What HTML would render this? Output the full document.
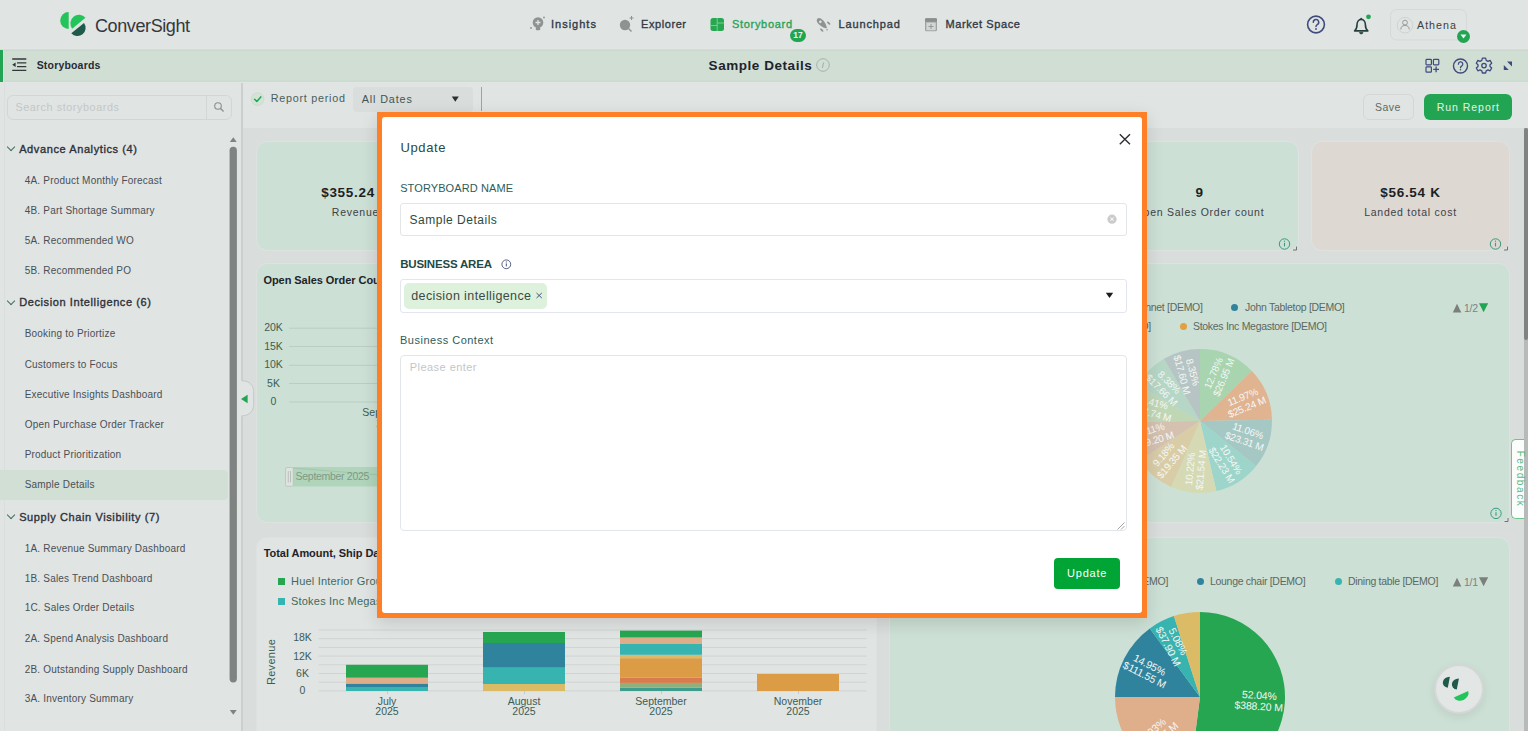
<!DOCTYPE html>
<html><head><meta charset="utf-8">
<style>
*{box-sizing:border-box;margin:0;padding:0}
html,body{width:1528px;height:731px;overflow:hidden}
body{position:relative;background:#d9dddc;font-family:"Liberation Sans",sans-serif;color:#2b2f3a}
.a{position:absolute}
.t{position:absolute;white-space:nowrap;line-height:1}
#hdr{left:0;top:0;width:1528px;height:49px;background:#e0e4e3;border-bottom:1px solid #e3e5e4}
#bar{left:0;top:49px;width:1528px;height:34px;background:#d0ded4;border-top:1px solid #d6ddd8;box-shadow:inset 0 1px 0 #c7d9cc,inset 0 -2px 0 #cbdcd0;border-bottom:1px solid #e3e5e4}
#side{left:0;top:83px;width:243px;height:648px;background:#e0e4e3;border-right:2px solid #cbcfce}
#tool{left:243px;top:83px;width:1285px;height:45px;background:#e0e4e3}
.nav{font-size:11px;-webkit-text-stroke:0.35px currentColor;color:#323a45}
.si{font-size:10px;color:#4a4f55;left:24.7px;letter-spacing:0.2px}
.sh{font-size:11px;-webkit-text-stroke:0.35px currentColor;color:#2d3139;left:19.2px;letter-spacing:0.6px}
.chev{position:absolute;left:8px;width:6px;height:6px;border-right:1px solid #3f6e5f;border-bottom:1px solid #3f6e5f;transform:rotate(45deg)}
.kpi{position:absolute;top:142px;width:197px;height:108px;background:#cde0d5;border-radius:10px;box-shadow:0 0 0 1px #dde1e0}
.kv{position:absolute;left:0;right:0;top:46px;text-align:center;font-size:14px;font-weight:bold;color:#1e2126;line-height:1}
.kl{position:absolute;left:0;right:0;top:66px;text-align:center;font-size:11px;color:#3c4045;line-height:1}
.card{position:absolute;background:#cde0d5;border-radius:10px;box-shadow:0 0 0 1px #dde1e0}
#modal{left:377px;top:112px;width:770px;height:506px;background:#ff7f27;box-shadow:0 5px 16px rgba(0,0,0,.13)}
#mi{left:5px;top:5px;width:760px;height:496px;background:#fff;border-radius:3px}
.lbl{font-size:11px;color:#2f5a58}
.inp{position:absolute;left:18px;width:726px;border:1px solid #e4e7ea;border-radius:3px;background:#fff}
</style></head>
<body>
<!-- HEADER -->
<div id="hdr" class="a"></div>
<svg class="a" style="left:0;top:0" width="100" height="50" viewBox="0 0 100 50">
<path d="M68.7,12 A8.5,8.5 0 0 0 68.7,29 Z" fill="#23c45a"/>
<path d="M72.2,28.7 A8.6,8.6 0 0 1 85.5,17.8 Z" fill="#23c45a"/>
<path d="M71.3,33.3 A8.15,8.15 0 0 0 84,23.1 Z" fill="#1f5a4b"/>
</svg>
<div class="t" style="left:95px;top:16.7px;font-size:18px;letter-spacing:-0.4px;color:#35383b">ConverSight</div>
<!-- nav icons -->
<svg class="a" style="left:520px;top:10px" width="520" height="34" viewBox="520 10 520 34">
 <!-- insights -->
 <circle cx="538" cy="22.5" r="5.3" fill="#8e9392"/>
 <rect x="535.8" y="27" width="4.4" height="3.2" rx="1" fill="#8e9392"/>
 <path d="M538,20 v5 M535.5,22.5 h5" stroke="#e0e4e3" stroke-width="1.3"/>
 <circle cx="531" cy="28" r="0.9" fill="#8e9392"/><circle cx="544" cy="17.5" r="0.9" fill="#8e9392"/>
 <!-- explorer -->
 <circle cx="625" cy="25" r="5.2" fill="#8e9392"/>
 <path d="M628.5,28.5 L631.5,31.5" stroke="#8e9392" stroke-width="1.4"/>
 <path d="M631.5,16 v4 M629.5,18 h4" stroke="#8e9392" stroke-width="1"/>
 <!-- storyboard -->
 <rect x="710.5" y="18" width="13.5" height="13" rx="2.5" fill="#27a850"/>
 <path d="M717.2,18 v13 M710.5,25.5 h6.7 M717.2,23 h6.8" stroke="#8fd3a6" stroke-width="0.8"/>
 <!-- launchpad -->
 <g transform="translate(822.2,23.6) rotate(45)" fill="#8e9392">
  <path d="M-6.8,0 C-6.8,-3.2 -1,-3.5 3,-2 C5,-1.1 6.4,-0.5 6.4,0 C6.4,0.5 5,1.1 3,2 C-1,3.5 -6.8,3.2 -6.8,0 Z"/>
  <circle cx="-2.6" cy="0" r="1.3" fill="#e0e4e3"/>
  <ellipse cx="4.3" cy="-4.9" rx="2.1" ry="0.95"/>
  <ellipse cx="4.3" cy="4.9" rx="2.1" ry="0.95"/>
  <circle cx="7.8" cy="0.9" r="0.75"/>
 </g>
 <!-- market space -->
 <rect x="925" y="18.2" width="12" height="13" rx="1.5" fill="#9ea3a2"/>
 <rect x="925" y="18.2" width="12" height="3.5" rx="1" fill="#8a8f8e"/>
 <rect x="926.3" y="22.5" width="9.4" height="7.8" fill="#d2d6d5"/>
 <path d="M931,24 v5 M928.5,26.5 h5" stroke="#8e9392" stroke-width="0.9"/>
</svg>
<div class="t nav" style="left:551px;top:18.55px;letter-spacing:1.0px">Insights</div>
<div class="t nav" style="left:641px;top:18.55px;letter-spacing:0.58px">Explorer</div>
<div class="t nav" style="left:732px;top:18.55px;letter-spacing:0.69px;color:#2aa358">Storyboard</div>
<div class="a" style="left:790px;top:28.5px;width:16px;height:13px;border-radius:7px;background:#22a553;color:#e8f5ec;font-size:8.5px;font-weight:bold;line-height:13px;text-align:center">17</div>
<div class="t nav" style="left:838.5px;top:18.55px;letter-spacing:0.88px">Launchpad</div>
<div class="t nav" style="left:945.5px;top:18.55px;letter-spacing:0.6px">Market Space</div>
<!-- right header -->
<svg class="a" style="left:1300px;top:5px" width="180" height="42" viewBox="1300 5 180 42">
 <circle cx="1316" cy="24.5" r="8.4" fill="none" stroke="#3f4b7c" stroke-width="1.6"/>
 <path d="M1313.3,22.3 a2.7,2.7 0 1 1 4,2.3 c-1,0.6 -1.3,1 -1.3,2" fill="none" stroke="#3f4b7c" stroke-width="1.5" stroke-linecap="round"/>
 <circle cx="1316" cy="29" r="0.9" fill="#3f4b7c"/>
 <path d="M1354.6,30.9 C1356.6,29.3 1357,27.2 1357,24.8 C1357,21.6 1358.8,19.4 1361.2,19.4 C1363.6,19.4 1365.4,21.6 1365.4,24.8 C1365.4,27.2 1365.8,29.3 1367.8,30.9 Z" fill="none" stroke="#25403a" stroke-width="1.6" stroke-linejoin="round"/>
 <circle cx="1361.2" cy="18.6" r="0.9" fill="#25403a"/>
 <path d="M1359.4,32.6 a1.9,1.9 0 0 0 3.6,0 Z" fill="#25403a" stroke="#25403a" stroke-width="0.8"/>
 <circle cx="1368.5" cy="16.8" r="2.4" fill="#22a553"/>
 <rect x="1390.5" y="9.5" width="76" height="30.5" rx="6" fill="none" stroke="#d5d9d8"/>
 <circle cx="1405" cy="25.2" r="7.8" fill="none" stroke="#cfd3d2"/>
 <circle cx="1405" cy="22.6" r="2.4" fill="none" stroke="#8e9392" stroke-width="0.9"/>
 <path d="M1400.8,29.5 a4.2,4 0 0 1 8.4,0" fill="none" stroke="#8e9392" stroke-width="0.9"/>
 <circle cx="1463.5" cy="36.5" r="6.5" fill="#22a553"/>
 <path d="M1460.5,34.6 h6 l-3,4 z" fill="#e8f5ec"/>
</svg>
<div class="t" style="left:1417px;top:19.91px;font-size:10.7px;letter-spacing:1px;color:#3b3f45">Athena</div>

<!-- BAR -->
<div id="bar" class="a"></div>
<div class="a" style="left:0;top:50px;width:3px;height:32px;background:#22a553"></div><div class="a" style="left:3px;top:50px;width:1px;height:32px;background:#dbe5de"></div>
<svg class="a" style="left:0;top:50px" width="40" height="32" viewBox="0 50 40 32">
 <path d="M12.2,59 h14.1 M17,62.8 h9.3 M17,66.6 h9.3 M12.2,70.3 h14.1" stroke="#34383b" stroke-width="1.3"/>
 <path d="M12.2,64.7 L15.6,62.4 L15.6,67 Z" fill="#34383b"/>
</svg>
<div class="t" style="left:36.7px;top:59.98px;font-size:10.5px;font-weight:bold;letter-spacing:0.18px;color:#272b33">Storyboards</div>
<div class="t" style="left:708.6px;top:58.7px;font-size:13.5px;font-weight:bold;letter-spacing:0.55px;color:#1f232b">Sample Details</div>
<svg class="a" style="left:1400px;top:50px" width="128" height="32" viewBox="1400 50 128 32">
 <rect x="1426" y="59.4" width="5.4" height="5.4" rx="0.8" fill="none" stroke="#3f4b7c" stroke-width="1.2"/>
 <rect x="1433.4" y="59.4" width="5.4" height="5.4" rx="0.8" fill="none" stroke="#3f4b7c" stroke-width="1.2"/>
 <rect x="1426" y="66.8" width="5.4" height="5.4" rx="0.8" fill="none" stroke="#3f4b7c" stroke-width="1.2"/>
 <path d="M1436.1,66.5 v5.8 M1433.2,69.4 h5.8" stroke="#3f4b7c" stroke-width="1.3"/>
 <circle cx="1460.5" cy="66" r="7" fill="none" stroke="#3f4b7c" stroke-width="1.4"/>
 <path d="M1458.4,64.2 a2.2,2.2 0 1 1 3.2,1.9 c-0.8,0.5 -1.1,0.8 -1.1,1.7" fill="none" stroke="#3f4b7c" stroke-width="1.3" stroke-linecap="round"/>
 <circle cx="1460.5" cy="69.8" r="0.75" fill="#3f4b7c"/>
 <g transform="translate(1484,65.6)" fill="none" stroke="#3f4b7c" stroke-width="1.3" stroke-linejoin="round">
  <path d="M-1.6,-7.4 L1.6,-7.4 L2.2,-5.2 L4,-4.3 L6.1,-5.2 L7.7,-2.4 L6,-0.9 L6,0.9 L7.7,2.4 L6.1,5.2 L4,4.3 L2.2,5.2 L1.6,7.4 L-1.6,7.4 L-2.2,5.2 L-4,4.3 L-6.1,5.2 L-7.7,2.4 L-6,0.9 L-6,-0.9 L-7.7,-2.4 L-6.1,-5.2 L-4,-4.3 L-2.2,-5.2 Z"/>
  <circle r="2.2"/>
 </g>
 <path d="M1507,61.6 L1512,61.6 L1512,66.6 Z M1503.8,65 L1503.8,70 L1508.8,70 Z" fill="#3f4b7c"/>
</svg>
<svg class="a" style="left:810px;top:52px" width="26" height="26" viewBox="810 52 26 26">
 <circle cx="823" cy="65" r="6.3" fill="none" stroke="#a3aca7" stroke-width="0.9"/>
 <path d="M823.6,62.5 L822.4,68" stroke="#a3aca7" stroke-width="1"/>
</svg>
<!-- SIDEBAR -->
<div id="side" class="a"></div>
<div class="a" style="left:6.5px;top:94.5px;width:225px;height:25px;border:1px solid #d2d6d5;border-radius:6px"></div>
<div class="a" style="left:206px;top:95px;width:1px;height:24px;background:#d2d6d5"></div>
<svg class="a" style="left:210px;top:98px" width="20" height="18" viewBox="210 98 20 18">
 <circle cx="218" cy="106" r="3.3" fill="none" stroke="#8a8f8e" stroke-width="1.1"/>
 <path d="M220.5,108.5 L223.6,111.5" stroke="#8a8f8e" stroke-width="1.2"/>
</svg>
<div class="t" style="left:15.4px;top:101.82px;font-size:10.8px;letter-spacing:0.58px;color:#c3c7c6">Search storyboards</div>
<div id="tool" class="a"></div>

<div class="a" style="left:4px;top:82px;width:1px;height:649px;background:#dadedd"></div>
<div class="a" style="left:0;top:470px;width:228px;height:30px;background:#d1dfd5;border-radius:0 4px 4px 0"></div>
<div class="chev" style="top:143.6px"></div>
<div class="t sh" style="top:143.59px">Advance Analytics (4)</div>
<div class="t si" style="top:175.75px">4A. Product Monthly Forecast</div>
<div class="t si" style="top:206.05px">4B. Part Shortage Summary</div>
<div class="t si" style="top:236.45px">5A. Recommended WO</div>
<div class="t si" style="top:265.95px">5B. Recommended PO</div>
<div class="chev" style="top:297.5px"></div>
<div class="t sh" style="top:297.49px">Decision Intelligence (6)</div>
<div class="t si" style="top:329.25px">Booking to Priortize</div>
<div class="t si" style="top:359.55px">Customers to Focus</div>
<div class="t si" style="top:389.95px">Executive Insights Dashboard</div>
<div class="t si" style="top:419.75px">Open Purchase Order Tracker</div>
<div class="t si" style="top:450.15px">Product Prioritization</div>
<div class="t si" style="top:480.45px">Sample Details</div>
<div class="chev" style="top:511.6px"></div>
<div class="t sh" style="top:511.59px">Supply Chain Visibility (7)</div>
<div class="t si" style="top:543.75px">1A. Revenue Summary Dashboard</div>
<div class="t si" style="top:573.55px">1B. Sales Trend Dashboard</div>
<div class="t si" style="top:603.45px">1C. Sales Order Details</div>
<div class="t si" style="top:634.25px">2A. Spend Analysis Dashboard</div>
<div class="t si" style="top:664.55px">2B. Outstanding Supply Dashboard</div>
<div class="t si" style="top:694.45px">3A. Inventory Summary</div>
<svg class="a" style="left:226px;top:130px" width="14" height="600" viewBox="226 130 14 600"><path d="M229.8,142 L233.3,137.3 L236.7,142 Z" fill="#7f8382"/><rect x="229.6" y="146.8" width="7.3" height="535.6" rx="3.6" fill="#7f8382"/><path d="M229.8,710 L233.3,714.7 L236.7,710 Z" fill="#7f8382"/></svg>
<svg class="a" style="left:238px;top:370px" width="20" height="56" viewBox="238 370 20 56"><path d="M240.8,380.8 H242 C249.5,380.8 253.6,385.5 253.6,391.5 V404.6 C253.6,410.6 249.5,415.8 242,415.8 H240.8 Z" fill="#e0e4e3"/><path d="M242,380.8 C249.5,380.8 253.6,385.5 253.6,391.5 V404.6 C253.6,410.6 249.5,415.8 242,415.8" fill="none" stroke="#c5cac8" stroke-width="1"/><path d="M241,399 L247.6,394.8 L247.6,403.2 Z" fill="#22a553"/></svg>
<svg class="a" style="left:248px;top:90px" width="20" height="18" viewBox="248 90 20 18">
 <circle cx="257.6" cy="99.1" r="6.3" fill="#d3e4d7" stroke="#c6d9cb" stroke-width="0.8"/>
 <path d="M254.6,99.3 L256.8,101.5 L260.8,96.9" fill="none" stroke="#22a553" stroke-width="1.5" stroke-linecap="round" stroke-linejoin="round"/>
</svg>
<div class="t" style="left:270.7px;top:93.42px;font-size:10.8px;letter-spacing:0.74px;color:#4b5f58">Report period</div>
<div class="a" style="left:353px;top:87px;width:119.5px;height:24.5px;background:#d9dddc;border-radius:4px"></div>
<div class="t" style="left:361.8px;top:93.82px;font-size:10.8px;letter-spacing:0.85px;color:#3f5750">All Dates</div>
<svg class="a" style="left:448px;top:92px" width="14" height="12" viewBox="448 92 14 12"><path d="M451.8,96.6 L458.8,96.6 L455.3,101.8 Z" fill="#2c3033"/></svg>
<div class="a" style="left:481px;top:87px;width:1.2px;height:24px;background:#9ea2a1"></div>
<div class="a" style="left:1362.5px;top:94.3px;width:51px;height:25.4px;border:1px solid #d3d7d6;border-radius:6px"></div>
<div class="t" style="left:1375px;top:101.98px;font-size:10.5px;letter-spacing:0.45px;color:#5c6a63">Save</div>
<div class="a" style="left:1424px;top:94.3px;width:88px;height:25.4px;background:#22a553;border-radius:6px"></div>
<div class="t" style="left:1436.8px;top:101.98px;font-size:10.5px;letter-spacing:0.95px;color:#e3f3e8">Run Report</div>
<!-- main scrollbar -->
<div class="a" style="left:1524px;top:128px;width:4px;height:603px;background:#b6bab9"></div><div class="a" style="left:1523.5px;top:128.2px;width:4.5px;height:212px;background:#7f8382;border-radius:2px"></div>

<div class="kpi" style="left:257px;background:#cde0d5"></div>
<div class="t" style="left:155.50px;width:400px;text-align:center;top:186.22px;font-size:13.5px;font-weight:bold;letter-spacing:0.7px;color:#1c1f24">$355.24 K</div>
<div class="t" style="left:155.50px;width:400px;text-align:center;top:206.88px;font-size:10.5px;letter-spacing:0.75px;color:#3d4146">Revenue</div>
<svg class="a" style="left:432px;top:236px" width="22" height="16" viewBox="432 236 22 16"><circle cx="440.5" cy="244" r="5.2" fill="none" stroke="#3a9a82" stroke-width="1"/><path d="M440.5,242.8 v3.6" stroke="#3a9a82" stroke-width="1.1"/><circle cx="440.5" cy="241.2" r="0.65" fill="#3a9a82"/><path d="M452.5,246.5 v3.5 h-3.5" fill="none" stroke="#5f6b66" stroke-width="0.9"/></svg>
<div class="kpi" style="left:468px;background:#cde0d5"></div>
<div class="t" style="left:366.50px;width:400px;text-align:center;top:186.22px;font-size:13.5px;font-weight:bold;letter-spacing:0.7px;color:#1c1f24">$78.20 K</div>
<div class="t" style="left:366.50px;width:400px;text-align:center;top:206.88px;font-size:10.5px;letter-spacing:0.75px;color:#3d4146">Open Purchase Order</div>
<svg class="a" style="left:643px;top:236px" width="22" height="16" viewBox="643 236 22 16"><circle cx="651.5" cy="244" r="5.2" fill="none" stroke="#3a9a82" stroke-width="1"/><path d="M651.5,242.8 v3.6" stroke="#3a9a82" stroke-width="1.1"/><circle cx="651.5" cy="241.2" r="0.65" fill="#3a9a82"/><path d="M663.5,246.5 v3.5 h-3.5" fill="none" stroke="#5f6b66" stroke-width="0.9"/></svg>
<div class="kpi" style="left:679px;background:#cde0d5"></div>
<div class="t" style="left:577.50px;width:400px;text-align:center;top:186.22px;font-size:13.5px;font-weight:bold;letter-spacing:0.7px;color:#1c1f24">12</div>
<div class="t" style="left:577.50px;width:400px;text-align:center;top:206.88px;font-size:10.5px;letter-spacing:0.75px;color:#3d4146">Open Purchase Orders</div>
<svg class="a" style="left:854px;top:236px" width="22" height="16" viewBox="854 236 22 16"><circle cx="862.5" cy="244" r="5.2" fill="none" stroke="#3a9a82" stroke-width="1"/><path d="M862.5,242.8 v3.6" stroke="#3a9a82" stroke-width="1.1"/><circle cx="862.5" cy="241.2" r="0.65" fill="#3a9a82"/><path d="M874.5,246.5 v3.5 h-3.5" fill="none" stroke="#5f6b66" stroke-width="0.9"/></svg>
<div class="kpi" style="left:890px;background:#cde0d5"></div>
<div class="t" style="left:788.50px;width:400px;text-align:center;top:186.22px;font-size:13.5px;font-weight:bold;letter-spacing:0.7px;color:#1c1f24">$21.35 K</div>
<div class="t" style="left:788.50px;width:400px;text-align:center;top:206.88px;font-size:10.5px;letter-spacing:0.75px;color:#3d4146">Open Sales Amount</div>
<svg class="a" style="left:1065px;top:236px" width="22" height="16" viewBox="1065 236 22 16"><circle cx="1073.5" cy="244" r="5.2" fill="none" stroke="#3a9a82" stroke-width="1"/><path d="M1073.5,242.8 v3.6" stroke="#3a9a82" stroke-width="1.1"/><circle cx="1073.5" cy="241.2" r="0.65" fill="#3a9a82"/><path d="M1085.5,246.5 v3.5 h-3.5" fill="none" stroke="#5f6b66" stroke-width="0.9"/></svg>
<div class="kpi" style="left:1101px;background:#cde0d5"></div>
<div class="t" style="left:999.50px;width:400px;text-align:center;top:186.22px;font-size:13.5px;font-weight:bold;letter-spacing:0.7px;color:#1c1f24">9</div>
<div class="t" style="left:999.50px;width:400px;text-align:center;top:206.88px;font-size:10.5px;letter-spacing:0.75px;color:#3d4146">Open Sales Order count</div>
<svg class="a" style="left:1276px;top:236px" width="22" height="16" viewBox="1276 236 22 16"><circle cx="1284.5" cy="244" r="5.2" fill="none" stroke="#3a9a82" stroke-width="1"/><path d="M1284.5,242.8 v3.6" stroke="#3a9a82" stroke-width="1.1"/><circle cx="1284.5" cy="241.2" r="0.65" fill="#3a9a82"/><path d="M1296.5,246.5 v3.5 h-3.5" fill="none" stroke="#5f6b66" stroke-width="0.9"/></svg>
<div class="kpi" style="left:1312px;background:#ddd8d2"></div>
<div class="t" style="left:1210.50px;width:400px;text-align:center;top:186.22px;font-size:13.5px;font-weight:bold;letter-spacing:0.7px;color:#1c1f24">$56.54 K</div>
<div class="t" style="left:1210.50px;width:400px;text-align:center;top:206.88px;font-size:10.5px;letter-spacing:0.75px;color:#3d4146">Landed total cost</div>
<svg class="a" style="left:1487px;top:236px" width="22" height="16" viewBox="1487 236 22 16"><circle cx="1495.5" cy="244" r="5.2" fill="none" stroke="#3a9a82" stroke-width="1"/><path d="M1495.5,242.8 v3.6" stroke="#3a9a82" stroke-width="1.1"/><circle cx="1495.5" cy="241.2" r="0.65" fill="#3a9a82"/><path d="M1507.5,246.5 v3.5 h-3.5" fill="none" stroke="#5f6b66" stroke-width="0.9"/></svg>
<div class="card" style="left:257px;top:264px;width:619px;height:258px"></div>
<div class="card" style="left:890px;top:264px;width:619px;height:258px"></div>
<div class="card" style="left:257px;top:538px;width:619px;height:220px;background:#e0e4e3"></div>
<div class="card" style="left:890px;top:538px;width:619px;height:220px"></div>
<div class="t" style="left:263.40px;top:275.15px;font-size:11px;font-weight:bold;letter-spacing:-0.05px;color:#1f2328">Open Sales Order Count, Order Date</div>
<svg class="a" style="left:257px;top:264px" width="619" height="258" viewBox="257 264 619 258">
<path d="M289,328.2 H866" stroke="#bccdc3" stroke-width="1"/>
<path d="M289,346.5 H866" stroke="#bccdc3" stroke-width="1"/>
<path d="M289,365.3 H866" stroke="#bccdc3" stroke-width="1"/>
<path d="M289,383.5 H866" stroke="#bccdc3" stroke-width="1"/>
<path d="M289,402.0 H866" stroke="#bccdc3" stroke-width="1"/>
<rect x="293" y="467" width="560" height="19.5" fill="#b0d5ba"/>
<path d="M293,468 L380,475 L853,476" fill="none" stroke="#9fc0aa" stroke-width="0.8"/>
<rect x="285.5" y="467.5" width="7.8" height="18.8" rx="1.5" fill="#dde3df" stroke="#b9c1bc" stroke-width="0.8"/>
<path d="M288.3,471 v11.5 M290.5,471 v11.5" stroke="#a9b1ac" stroke-width="0.7"/>
</svg>
<div class="t" style="left:73.50px;width:400px;text-align:center;top:322.38px;font-size:10.5px;color:#3b5d55">20K</div>
<div class="t" style="left:73.50px;width:400px;text-align:center;top:340.68px;font-size:10.5px;color:#3b5d55">15K</div>
<div class="t" style="left:73.50px;width:400px;text-align:center;top:359.48px;font-size:10.5px;color:#3b5d55">10K</div>
<div class="t" style="left:73.50px;width:400px;text-align:center;top:377.68px;font-size:10.5px;color:#3b5d55">5K</div>
<div class="t" style="left:73.50px;width:400px;text-align:center;top:396.18px;font-size:10.5px;color:#3b5d55">0</div>
<div class="t" style="left:188.00px;width:400px;text-align:center;top:406.97px;font-size:10.5px;color:#3b5d55">September</div>
<div class="t" style="left:188.00px;width:400px;text-align:center;top:417.57px;font-size:10.5px;color:#3b5d55">2025</div>
<div class="t" style="left:295.60px;top:471.07px;font-size:10.5px;letter-spacing:-0.3px;color:#7f9a88">September 2025</div>
<div class="t" style="left:802.60px;width:400px;text-align:right;top:301.57px;font-size:10.5px;letter-spacing:-0.3px;color:#5a6962">Walsh Bonnet [DEMO]</div>
<div class="a" style="left:1230.5px;top:303.5px;width:7px;height:7px;border-radius:50%;background:#30839d"></div>
<div class="t" style="left:1245.00px;top:301.57px;font-size:10.5px;letter-spacing:-0.3px;color:#5a6962">John Tabletop [DEMO]</div>
<div class="t" style="left:751.00px;width:400px;text-align:right;top:320.88px;font-size:10.5px;letter-spacing:-0.3px;color:#5a6962">Mills [DEMO]</div>
<div class="a" style="left:1179.5px;top:322.5px;width:7px;height:7px;border-radius:50%;background:#e3a040"></div>
<div class="t" style="left:1193.00px;top:320.88px;font-size:10.5px;letter-spacing:-0.3px;color:#5a6962">Stokes Inc Megastore [DEMO]</div>
<svg class="a" style="left:1450px;top:300px" width="42" height="14" viewBox="1450 300 42 14"><path d="M1452.8,312.5 L1457,303.7 L1461.3,312.5 Z" fill="#7b807d"/><path d="M1479,303.2 L1488.2,303.2 L1483.6,312.2 Z" fill="#22a553"/></svg><div class="t" style="left:1464.00px;top:302.68px;font-size:10.5px;letter-spacing:-0.3px;color:#7d827f">1/2</div>
<svg class="a" style="left:1126px;top:347px" width="148" height="148" viewBox="1126 347 148 148" overflow="visible">
<path d="M1200,421 L1200.00,349.00 A72,72 0 0 1 1251.80,370.99 Z" fill="#a8d4b0"/>
<path d="M1200,421 L1251.80,370.99 A72,72 0 0 1 1271.99,419.87 Z" fill="#e0b391"/>
<path d="M1200,421 L1271.99,419.87 A72,72 0 0 1 1256.02,466.23 Z" fill="#a5c8c4"/>
<path d="M1200,421 L1256.02,466.23 A72,72 0 0 1 1216.37,491.11 Z" fill="#9dd5ca"/>
<path d="M1200,421 L1216.37,491.11 A72,72 0 0 1 1171.12,486.95 Z" fill="#d5dab4"/>
<path d="M1200,421 L1171.12,486.95 A72,72 0 0 1 1139.82,460.53 Z" fill="#d9cda7"/>
<path d="M1200,421 L1139.82,460.53 A72,72 0 0 1 1128.00,421.63 Z" fill="#d5c1af"/>
<path d="M1200,421 L1128.00,421.63 A72,72 0 0 1 1137.50,385.25 Z" fill="#c0d7b6"/>
<path d="M1200,421 L1137.50,385.25 A72,72 0 0 1 1163.93,358.68 Z" fill="#b6d6c6"/>
<path d="M1200,421 L1163.93,358.68 A72,72 0 0 1 1200.00,349.00 Z" fill="#b6c5c4"/>
</svg>
<div class="a" style="left:1179.1px;top:365.4px;width:80px;height:21.0px;transform:rotate(-67.0deg);text-align:center;color:#f4f7f5;font-size:10px;line-height:10.5px;letter-spacing:-0.2px;white-space:nowrap">12.78%<br>$26.95 M</div>
<div class="a" style="left:1205.3px;top:391.8px;width:80px;height:21.0px;transform:rotate(-22.4deg);text-align:center;color:#f4f7f5;font-size:10px;line-height:10.5px;letter-spacing:-0.2px;white-space:nowrap">11.97%<br>$25.24 M</div>
<div class="a" style="left:1206.3px;top:426.4px;width:80px;height:21.0px;transform:rotate(19.0deg);text-align:center;color:#f4f7f5;font-size:10px;line-height:10.5px;letter-spacing:-0.2px;white-space:nowrap">11.06%<br>$23.31 M</div>
<div class="a" style="left:1186.0px;top:452.0px;width:80px;height:21.0px;transform:rotate(57.9deg);text-align:center;color:#f4f7f5;font-size:10px;line-height:10.5px;letter-spacing:-0.2px;white-space:nowrap">10.54%<br>$22.23 M</div>
<div class="a" style="left:1155.5px;top:459.3px;width:80px;height:21.0px;transform:rotate(-84.7deg);text-align:center;color:#f4f7f5;font-size:10px;line-height:10.5px;letter-spacing:-0.2px;white-space:nowrap">10.22%<br>$21.54 M</div>
<div class="a" style="left:1128.4px;top:447.9px;width:80px;height:21.0px;transform:rotate(-49.8deg);text-align:center;color:#f4f7f5;font-size:10px;line-height:10.5px;letter-spacing:-0.2px;white-space:nowrap">9.18%<br>$19.35 M</div>
<div class="a" style="left:1113.2px;top:424.7px;width:80px;height:21.0px;transform:rotate(-16.9deg);text-align:center;color:#f4f7f5;font-size:10px;line-height:10.5px;letter-spacing:-0.2px;white-space:nowrap">9.11%<br>$19.20 M</div>
<div class="a" style="left:1112.6px;top:398.1px;width:80px;height:21.0px;transform:rotate(14.6deg);text-align:center;color:#f4f7f5;font-size:10px;line-height:10.5px;letter-spacing:-0.2px;white-space:nowrap">8.41%<br>$17.74 M</div>
<div class="a" style="left:1125.3px;top:376.0px;width:80px;height:21.0px;transform:rotate(44.9deg);text-align:center;color:#f4f7f5;font-size:10px;line-height:10.5px;letter-spacing:-0.2px;white-space:nowrap">8.38%<br>$17.66 M</div>
<div class="a" style="left:1147.3px;top:363.2px;width:80px;height:21.0px;transform:rotate(75.0deg);text-align:center;color:#f4f7f5;font-size:10px;line-height:10.5px;letter-spacing:-0.2px;white-space:nowrap">8.35%<br>$17.60 M</div>
<svg class="a" style="left:1487px;top:504px" width="24" height="20" viewBox="1487 504 24 20"><circle cx="1496" cy="513.4" r="5.2" fill="none" stroke="#3a9a82" stroke-width="1"/><path d="M1496,512.2 v3.6" stroke="#3a9a82" stroke-width="1.1"/><circle cx="1496" cy="510.6" r="0.65" fill="#3a9a82"/><path d="M1508,518 v3.5 h-3.5" fill="none" stroke="#5f6b66" stroke-width="0.9"/></svg>
<div class="t" style="left:263.70px;top:548.15px;font-size:11px;font-weight:bold;letter-spacing:-0.05px;color:#1f2328">Total Amount, Ship Date</div>
<div class="a" style="left:278px;top:578px;width:7px;height:7px;background:#27a651"></div>
<div class="t" style="left:291.00px;top:575.85px;font-size:11px;letter-spacing:0.2px;color:#3e6a5e">Huel Interior Group [DEMO]</div>
<div class="a" style="left:278px;top:598px;width:7px;height:7px;background:#37b3b0"></div>
<div class="t" style="left:291.00px;top:595.95px;font-size:11px;letter-spacing:0.2px;color:#3e6a5e">Stokes Inc Megastore [DEMO]</div>
<svg class="a" style="left:257px;top:538px" width="619" height="193" viewBox="257 538 619 193">
<path d="M318.7,630.0 H866.6" stroke="#cfd3d2" stroke-width="1"/>
<path d="M318.7,638.7 H866.6" stroke="#cfd3d2" stroke-width="1"/>
<path d="M318.7,647.4 H866.6" stroke="#cfd3d2" stroke-width="1"/>
<path d="M318.7,656.1 H866.6" stroke="#cfd3d2" stroke-width="1"/>
<path d="M318.7,664.8 H866.6" stroke="#cfd3d2" stroke-width="1"/>
<path d="M318.7,673.5 H866.6" stroke="#cfd3d2" stroke-width="1"/>
<path d="M318.7,682.2 H866.6" stroke="#cfd3d2" stroke-width="1"/>
<path d="M318.7,690.9 H866.6" stroke="#cfd3d2" stroke-width="1"/>
<rect x="346" y="687.6" width="82" height="3.4" fill="#37b3b0"/>
<rect x="346" y="683.5" width="82" height="4.1" fill="#30839d"/>
<rect x="346" y="677.7" width="82" height="5.8" fill="#e0ad8a"/>
<rect x="346" y="664.8" width="82" height="12.9" fill="#27a651"/>
<rect x="483" y="684.0" width="82" height="7.0" fill="#dcbb66"/>
<rect x="483" y="667.7" width="82" height="16.3" fill="#37b3b0"/>
<rect x="483" y="643.0" width="82" height="24.7" fill="#30839d"/>
<rect x="483" y="632.0" width="82" height="11.0" fill="#27a651"/>
<rect x="620" y="687.6" width="82" height="3.4" fill="#3d9c8c"/>
<rect x="620" y="682.9" width="82" height="4.7" fill="#8fb07d"/>
<rect x="620" y="677.7" width="82" height="5.2" fill="#d97c4d"/>
<rect x="620" y="658.2" width="82" height="19.5" fill="#dc9b45"/>
<rect x="620" y="654.8" width="82" height="3.4" fill="#dcbb66"/>
<rect x="620" y="644.0" width="82" height="10.8" fill="#37b3b0"/>
<rect x="620" y="637.5" width="82" height="6.5" fill="#e0ad8a"/>
<rect x="620" y="630.6" width="82" height="6.9" fill="#27a651"/>
<rect x="757" y="674.0" width="82" height="17.0" fill="#dc9b45"/>
<path d="M387.5,691 v3" stroke="#c5c9c8" stroke-width="1"/>
<path d="M524.5,691 v3" stroke="#c5c9c8" stroke-width="1"/>
<path d="M661.5,691 v3" stroke="#c5c9c8" stroke-width="1"/>
<path d="M798.5,691 v3" stroke="#c5c9c8" stroke-width="1"/>
</svg>
<div class="t" style="left:102.50px;width:400px;text-align:center;top:632.48px;font-size:10.5px;color:#3b5d55">18K</div>
<div class="t" style="left:102.50px;width:400px;text-align:center;top:650.68px;font-size:10.5px;color:#3b5d55">12K</div>
<div class="t" style="left:102.50px;width:400px;text-align:center;top:667.68px;font-size:10.5px;color:#3b5d55">6K</div>
<div class="t" style="left:102.50px;width:400px;text-align:center;top:684.68px;font-size:10.5px;color:#3b5d55">0</div>
<div class="a" style="left:230.6px;top:655px;width:80px;height:14px;transform:rotate(-90deg);text-align:center;font-size:11px;line-height:14px;color:#3b5d55;letter-spacing:0.3px">Revenue</div>
<div class="t" style="left:187.00px;width:400px;text-align:center;top:695.68px;font-size:10.5px;color:#3b5d55">July</div>
<div class="t" style="left:187.00px;width:400px;text-align:center;top:705.68px;font-size:10.5px;color:#3b5d55">2025</div>
<div class="t" style="left:324.00px;width:400px;text-align:center;top:695.68px;font-size:10.5px;color:#3b5d55">August</div>
<div class="t" style="left:324.00px;width:400px;text-align:center;top:705.68px;font-size:10.5px;color:#3b5d55">2025</div>
<div class="t" style="left:461.00px;width:400px;text-align:center;top:695.68px;font-size:10.5px;color:#3b5d55">September</div>
<div class="t" style="left:461.00px;width:400px;text-align:center;top:705.68px;font-size:10.5px;color:#3b5d55">2025</div>
<div class="t" style="left:598.00px;width:400px;text-align:center;top:695.68px;font-size:10.5px;color:#3b5d55">November</div>
<div class="t" style="left:598.00px;width:400px;text-align:center;top:705.68px;font-size:10.5px;color:#3b5d55">2025</div>
<div class="t" style="left:768.00px;width:400px;text-align:right;top:575.58px;font-size:10.5px;letter-spacing:-0.3px;color:#5a6962">Huel Interior Group [DEMO]</div>
<div class="a" style="left:1196.5px;top:577.5px;width:7px;height:7px;border-radius:50%;background:#30839d"></div>
<div class="t" style="left:1210.00px;top:575.58px;font-size:10.5px;letter-spacing:-0.3px;color:#5a6962">Lounge chair [DEMO]</div>
<div class="a" style="left:1334.5px;top:577.5px;width:7px;height:7px;border-radius:50%;background:#37b3b0"></div>
<div class="t" style="left:1348.00px;top:575.58px;font-size:10.5px;letter-spacing:-0.3px;color:#5a6962">Dining table [DEMO]</div>
<svg class="a" style="left:1450px;top:574px" width="42" height="14" viewBox="1450 574 42 14"><path d="M1452.8,586.5 L1457,577.7 L1461.3,586.5 Z" fill="#7b807d"/><path d="M1479,577.2 L1488.2,577.2 L1483.6,586.2 Z" fill="#7b807d"/></svg><div class="t" style="left:1464.00px;top:576.68px;font-size:10.5px;letter-spacing:-0.3px;color:#7d827f">1/1</div>
<svg class="a" style="left:1113px;top:610px" width="174" height="174" viewBox="1113 610 174 174" overflow="visible">
<path d="M1200,697 L1200.00,612.00 A85,85 0 1 1 1189.13,781.30 Z" fill="#27a651"/>
<path d="M1200,697 L1189.13,781.30 A85,85 0 0 1 1115.00,697.00 Z" fill="#dfae8b"/>
<path d="M1200,697 L1115.00,697.00 A85,85 0 0 1 1149.82,628.39 Z" fill="#30839d"/>
<path d="M1200,697 L1149.82,628.39 A85,85 0 0 1 1173.89,616.11 Z" fill="#37b3b0"/>
<path d="M1200,697 L1173.89,616.11 A85,85 0 0 1 1200.00,612.00 Z" fill="#dcbb66"/>
</svg>
<div class="a" style="left:1219.4px;top:689.8px;width:80px;height:22px;transform:rotate(3.7deg);text-align:center;color:#f4f7f5;font-size:10.5px;line-height:11px;letter-spacing:-0.15px;white-space:nowrap">52.04%<br>$388.20 M</div>
<div class="a" style="left:1115.3px;top:725.3px;width:80px;height:22px;transform:rotate(-41.3deg);text-align:center;color:#f4f7f5;font-size:10.5px;line-height:11px;letter-spacing:-0.15px;white-space:nowrap">22.93%<br>$171.05 M</div>
<div class="a" style="left:1106.9px;top:659.1px;width:80px;height:22px;transform:rotate(26.9deg);text-align:center;color:#f4f7f5;font-size:10.5px;line-height:11px;letter-spacing:-0.15px;white-space:nowrap">14.95%<br>$111.55 M</div>
<div class="a" style="left:1133.0px;top:633.0px;width:80px;height:22px;transform:rotate(63.0deg);text-align:center;color:#f4f7f5;font-size:10.5px;line-height:11px;letter-spacing:-0.15px;white-space:nowrap">5.08%<br>$37.90 M</div>
<!-- feedback -->
<div class="a" style="left:1510.5px;top:438.5px;width:13.5px;height:80px;background:#fbfdfc;border:1px solid #6fc48b;border-right:none;border-radius:5px 0 0 5px"></div>
<div class="a" style="left:1480px;top:472px;width:80px;height:14px;transform:rotate(90deg);text-align:center;font-size:10px;line-height:14px;letter-spacing:1.6px;color:#5cb87a">Feedback</div>
<!-- chat -->
<div class="a" style="left:1433.5px;top:663.8px;width:50px;height:50px;border-radius:50%;background:#e2e6e5;border:2.5px solid #d3d7d6;box-shadow:0 3px 10px rgba(0,0,0,.08)"></div>
<svg class="a" style="left:1434px;top:664px" width="49" height="49" viewBox="1434 664 49 49">
 <path d="M1449.9,676.8 A7.2,5.55 -8 0 0 1447.8,687.8 Z" fill="#1f5a4b"/>
 <path d="M1458.9,678.5 A7,5.6 -8 0 0 1456.8,689.6 Z" fill="#1f5a4b"/>
 <path d="M1453.8,697.4 A7.9,6.8 -24 0 0 1468.2,691 Z" fill="#23c45a"/>
</svg>
<!-- MODAL -->
<div id="modal" class="a"><div id="mi" class="a"></div></div>
<div class="t" style="left:400.5px;top:141.25px;font-size:13px;letter-spacing:0.6px;color:#2e4a40">Update</div>
<svg class="a" style="left:1116px;top:130px" width="18" height="18" viewBox="1116 130 18 18"><path d="M1119.8,134.2 L1130,144.2 M1130,134.2 L1119.8,144.2" stroke="#2b2f33" stroke-width="1.4"/></svg>
<div class="t" style="left:400.2px;top:182.65px;font-size:11px;letter-spacing:0.1px;color:#2f5b59">STORYBOARD NAME</div>
<div class="a" style="left:400px;top:203.4px;width:726.5px;height:33px;border:1px solid #e3e6e9;border-radius:3px"></div>
<div class="t" style="left:409.6px;top:213.8px;font-size:12px;letter-spacing:0.5px;color:#2e4a40">Sample Details</div>
<svg class="a" style="left:1104px;top:211px" width="16" height="16" viewBox="1104 211 16 16"><circle cx="1112" cy="219.2" r="4.6" fill="#c9cbcc"/><path d="M1110.3,217.5 L1113.7,220.9 M1113.7,217.5 L1110.3,220.9" stroke="#fff" stroke-width="1"/></svg>
<div class="t" style="left:400.2px;top:258.5px;font-size:11.5px;font-weight:bold;letter-spacing:-0.2px;color:#1f4a46">BUSINESS AREA</div>
<svg class="a" style="left:498px;top:256px" width="16" height="16" viewBox="498 256 16 16"><circle cx="506.3" cy="264.3" r="4.4" fill="none" stroke="#45507e" stroke-width="0.9"/><path d="M506.3,263.4 v3" stroke="#45507e" stroke-width="1"/><circle cx="506.3" cy="261.9" r="0.55" fill="#45507e"/></svg>
<div class="a" style="left:400px;top:279px;width:726.5px;height:33.8px;border:1px solid #e3e6ee;border-radius:3px"></div>
<div class="a" style="left:404.2px;top:282.7px;width:143px;height:26.2px;background:#ddf1dd;border-radius:5px"></div>
<div class="t" style="left:411.2px;top:290.3px;font-size:12.5px;letter-spacing:0.4px;color:#3b4a45">decision intelligence</div>
<svg class="a" style="left:533px;top:291px" width="12" height="10" viewBox="533 291 12 10"><path d="M536.5,293 L541.8,298 M541.8,293 L536.5,298" stroke="#4a5478" stroke-width="1"/></svg>
<svg class="a" style="left:1102px;top:289px" width="16" height="12" viewBox="1102 289 16 12"><path d="M1105.8,292.8 L1113.2,292.8 L1109.5,298 Z" fill="#1b1d1f"/></svg>
<div class="t" style="left:400px;top:335.35px;font-size:11px;letter-spacing:0.5px;color:#2f5b59">Business Context</div>
<div class="a" style="left:400px;top:355.4px;width:726.5px;height:176px;border:1px solid #e3e6e9;border-radius:4px"></div>
<svg class="a" style="left:1114px;top:519px" width="12" height="12" viewBox="1114 519 12 12"><path d="M1117.5,529.5 L1124.5,522.5 M1121,529.5 L1124.5,526" stroke="#9a9a9a" stroke-width="0.9"/></svg>
<div class="t" style="left:409.8px;top:362.1px;font-size:11px;letter-spacing:0.45px;color:#c3c6c8">Please enter</div>
<div class="a" style="left:1054.3px;top:557.5px;width:65.5px;height:31.4px;background:#00a536;border-radius:4px"></div>
<div class="t" style="left:1067px;top:567.8px;font-size:11px;letter-spacing:0.8px;color:#fff">Update</div>

</body></html>
